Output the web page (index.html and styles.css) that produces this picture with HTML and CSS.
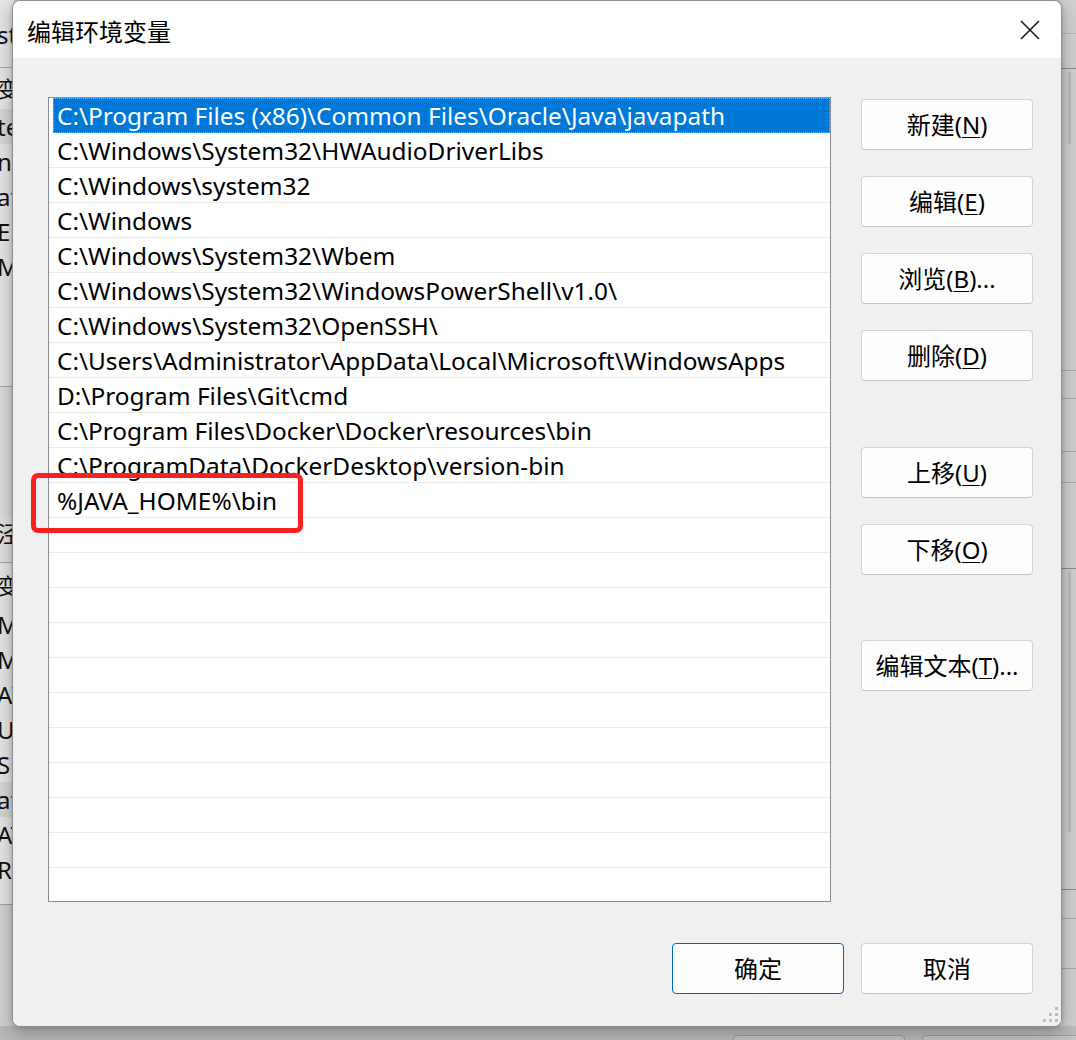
FILE: index.html
```html
<!DOCTYPE html>
<html lang="zh-CN">
<head>
<meta charset="utf-8">
<title>编辑环境变量</title>
<link rel="stylesheet" href="styles.css">
</head>
<body>
<div class="desktop">
  <div class="bg-left">
    <div class="bg-row first">st</div>
    <div class="bg-row hdr">变量</div>
    <div class="bg-row sel">te</div>
    <div class="bg-row">n</div>
    <div class="bg-row">at</div>
    <div class="bg-row">EN</div>
    <div class="bg-row">M</div>
    <div class="bg-spacer"></div>
    <div class="bg-dark"></div>
    <div class="bg-row grp">泾</div>
    <div class="bg-row hdr2">变量</div>
    <div class="bg-row">M</div>
    <div class="bg-row">M</div>
    <div class="bg-row">AV</div>
    <div class="bg-row">U</div>
    <div class="bg-row">S</div>
    <div class="bg-row sel">at</div>
    <div class="bg-row">AT</div>
    <div class="bg-row">R</div>
    <div class="bg-spacer2"></div>
    <div class="bg-foot"></div>
  </div>
  <div class="bg-right">
    <div class="r-line l1"></div>
    <div class="r-line l2"></div>
    <div class="r-thumb t1"></div>
    <div class="r-line l3"></div>
    <div class="r-line l4"></div>
    <div class="r-line l5"></div>
    <div class="r-line l6"></div>
    <div class="r-line l7"></div>
    <div class="r-thumb t2"></div>
    <div class="r-line l8"></div>
    <div class="r-line l9"></div>
    <div class="r-line l10"></div>
  </div>
  <div class="bg-bottom">
    <div class="bg-btn b1"></div>
    <div class="bg-btn b2"></div>
  </div>

  <div class="dialog">
    <div class="titlebar">
      <span class="title">编辑环境变量</span>
      <svg class="close" width="20" height="20" viewBox="0 0 20 20"><path d="M1 1 L19 19 M19 1 L1 19" stroke="#1a1a1a" stroke-width="1.6" fill="none"/></svg>
    </div>
    <div class="content">
      <div class="main">
        <div class="listbox">
          <div class="row selected"><span>C:\Program Files (x86)\Common Files\Oracle\Java\javapath</span></div>
          <div class="row"><span>C:\Windows\System32\HWAudioDriverLibs</span></div>
          <div class="row"><span>C:\Windows\system32</span></div>
          <div class="row"><span>C:\Windows</span></div>
          <div class="row"><span>C:\Windows\System32\Wbem</span></div>
          <div class="row"><span>C:\Windows\System32\WindowsPowerShell\v1.0\</span></div>
          <div class="row"><span>C:\Windows\System32\OpenSSH\</span></div>
          <div class="row"><span>C:\Users\Administrator\AppData\Local\Microsoft\WindowsApps</span></div>
          <div class="row"><span>D:\Program Files\Git\cmd</span></div>
          <div class="row"><span>C:\Program Files\Docker\Docker\resources\bin</span></div>
          <div class="row"><span>C:\ProgramData\DockerDesktop\version-bin</span></div>
          <div class="row"><span>%JAVA_HOME%\bin</span></div>
          <div class="row"></div>
          <div class="row"></div>
          <div class="row"></div>
          <div class="row"></div>
          <div class="row"></div>
          <div class="row"></div>
          <div class="row"></div>
          <div class="row"></div>
          <div class="row"></div>
          <div class="row"></div>
          <div class="row"></div>
        </div>
        <div class="side">
          <button class="btn">新建(<u>N</u>)</button>
          <button class="btn">编辑(<u>E</u>)</button>
          <button class="btn">浏览(<u>B</u>)...</button>
          <button class="btn">删除(<u>D</u>)</button>
          <button class="btn grp-start">上移(<u>U</u>)</button>
          <button class="btn">下移(<u>O</u>)</button>
          <button class="btn grp-start2">编辑文本(<u>T</u>)...</button>
        </div>
      </div>
      <div class="footer">
        <button class="btn default">确定</button>
        <button class="btn">取消</button>
      </div>
      <div class="grip">
        <i class="d1"></i><i class="d2"></i><i class="d3"></i><i class="d4"></i><i class="d5"></i><i class="d6"></i>
      </div>
    </div>
  </div>

  <div class="highlight"></div>
</div>
</body>
</html>
```

FILE: styles.css
```css
* { box-sizing: border-box; }
html, body { margin: 0; padding: 0; }
body {
  width: 1076px;
  height: 1040px;
  overflow: hidden;
  background: #c4c4c4;
  font-family: "Noto Sans", "Noto Sans CJK SC", sans-serif;
}
.desktop {
  position: relative;
  width: 1076px;
  height: 1040px;
  overflow: hidden;
  background: #c8c8c8;
}

/* background window, left strip */
.bg-left {
  position: absolute;
  left: 0; top: 0;
  width: 14px; height: 1040px;
  background: #e4e4e4;
  overflow: hidden;
  display: flex;
  flex-direction: column;
  font-size: 24px;
  color: #111;
}
.bg-row {
  flex: none;
  height: 35px;
  line-height: 35px;
  white-space: nowrap;
  text-indent: -3px;
}
.bg-row.first { height: 68px; line-height: 70px; border-bottom: 1px solid #a2a2a2; }
.bg-row.hdr { height: 41px; line-height: 40px; font-size: 22px; }
.bg-row.sel { background: #d5d5d5; }
.bg-spacer { flex: none; height: 103px; border-bottom: 1px solid #a0a0a0; }
.bg-dark { flex: none; height: 129px; background: #d9d9d9; }
.bg-row.grp { height: 47px; border-bottom: 1px solid #a0a0a0; background: #dedede; font-size: 22px; }
.bg-row.hdr2 { height: 44px; line-height: 44px; font-size: 22px; }
.bg-spacer2 { flex: none; height: 18px; border-bottom: 1px solid #a0a0a0; }
.bg-foot { flex: 1; background: #d0d0d0; }

/* background window, right strip */
.bg-right {
  position: absolute;
  left: 1060px; top: 0;
  width: 16px; height: 1040px;
  background: #cfcfcf;
}
.r-line { position: absolute; left: 0; right: 0; height: 1px; background: #a8a8a8; }
.r-line.l1 { top: 33px; background: #b8b8b8; }
.r-line.l2 { top: 68px; background: #8a8a8a; }
.r-line.l3 { top: 370px; }
.r-line.l4 { top: 398px; }
.r-line.l5 { top: 451px; }
.r-line.l6 { top: 482px; }
.r-line.l7 { top: 568px; background: #8a8a8a; }
.r-line.l8 { top: 889px; background: #8a8a8a; }
.r-line.l9 { top: 918px; }
.r-line.l10 { top: 968px; }
.r-thumb { position: absolute; left: 8px; width: 3px; background: #bdbdbd; }
.r-thumb.t1 { top: 72px; height: 72px; }
.r-thumb.t2 { top: 572px; height: 260px; }

.bg-bottom {
  position: absolute;
  left: 0; top: 1026px;
  width: 1076px; height: 14px;
  background: #b9b9b9;
}
.bg-btn {
  position: absolute;
  top: 9px; height: 20px;
  border: 1px solid #9c9c9c;
  border-radius: 4px;
  background: #c4c4c4;
}
.bg-btn.b1 { left: 733px; width: 172px; }
.bg-btn.b2 { left: 922px; width: 172px; }

/* dialog */
.dialog {
  position: absolute;
  left: 12px; top: 0;
  width: 1050px; height: 1027px;
  border: 1px solid #8e8e8e;
  border-radius: 8px;
  overflow: hidden;
  display: flex;
  flex-direction: column;
  background: #f0f0f0;
  box-shadow: 0 6px 18px rgba(0,0,0,0.28), 0 0 4px rgba(0,0,0,0.15);
}
.titlebar {
  height: 57px;
  flex: none;
  background: #ffffff;
  display: flex;
  align-items: center;
  justify-content: space-between;
  padding: 0 21px 0 14px;
}
.title {
  font-family: "Noto Sans CJK SC", sans-serif;
  font-size: 24px;
  color: #000;
  position: relative;
  top: 1px;
}
.close { display: block; }

.content {
  flex: 1;
  position: relative;
  background: #f0f0f0;
  padding: 39px 28px 0 35px;
  display: flex;
  flex-direction: column;
}
.main {
  display: flex;
  gap: 30px;
  align-items: flex-start;
}
.listbox {
  width: 783px;
  height: 805px;
  border: 1px solid #8b8b98;
  background: #fff;
  overflow: hidden;
  display: flex;
  flex-direction: column;
}
.row {
  flex: none;
  height: 35px;
  border-bottom: 1px solid #ebebeb;
  padding-left: 8px;
  font-size: 24.4px;
  line-height: 36px;
  white-space: nowrap;
  color: #000;
}
.row.selected {
  background: #0078d7;
  color: #fff;
  margin-left: 4px;
  padding-left: 4px;
  outline: 1px dotted #f0a040;
  outline-offset: -1px;
  border-bottom-color: #0078d7;
}

.side {
  width: 172px;
  display: flex;
  flex-direction: column;
  gap: 26px;
  padding-top: 2px;
}
.btn {
  width: 172px;
  height: 51px;
  flex: none;
  background: #fdfdfd;
  border: 1px solid #d3d3d3;
  border-bottom-color: #c2c2c2;
  border-radius: 4px;
  font-family: "Noto Sans", "Noto Sans CJK SC", sans-serif;
  font-size: 24px;
  color: #000;
  padding: 0;
  line-height: 1;
}
.btn u { text-underline-offset: 3px; text-decoration-thickness: 1px; }
.btn.grp-start { margin-top: 40px; }
.btn.grp-start2 { margin-top: 39px; }
.btn.default { border: 1px solid #0067c0; }

.footer {
  display: flex;
  justify-content: flex-end;
  gap: 17px;
  margin-top: 41px;
}

.grip {
  position: absolute;
  right: 2px; bottom: 3px;
  width: 17px; height: 16px;
}
.grip i { position: absolute; width: 3px; height: 3px; background: #bdbdbd; }
.grip .d1 { right: 1px; top: 0; }
.grip .d2 { right: 1px; top: 6px; }
.grip .d3 { right: 7px; top: 6px; }
.grip .d4 { right: 1px; top: 12px; }
.grip .d5 { right: 7px; top: 12px; }
.grip .d6 { right: 13px; top: 12px; }

/* red annotation box */
.highlight {
  position: absolute;
  left: 31px; top: 473px;
  width: 272px; height: 60px;
  border: 5px solid #fb2020;
  border-radius: 7px;
}
```
